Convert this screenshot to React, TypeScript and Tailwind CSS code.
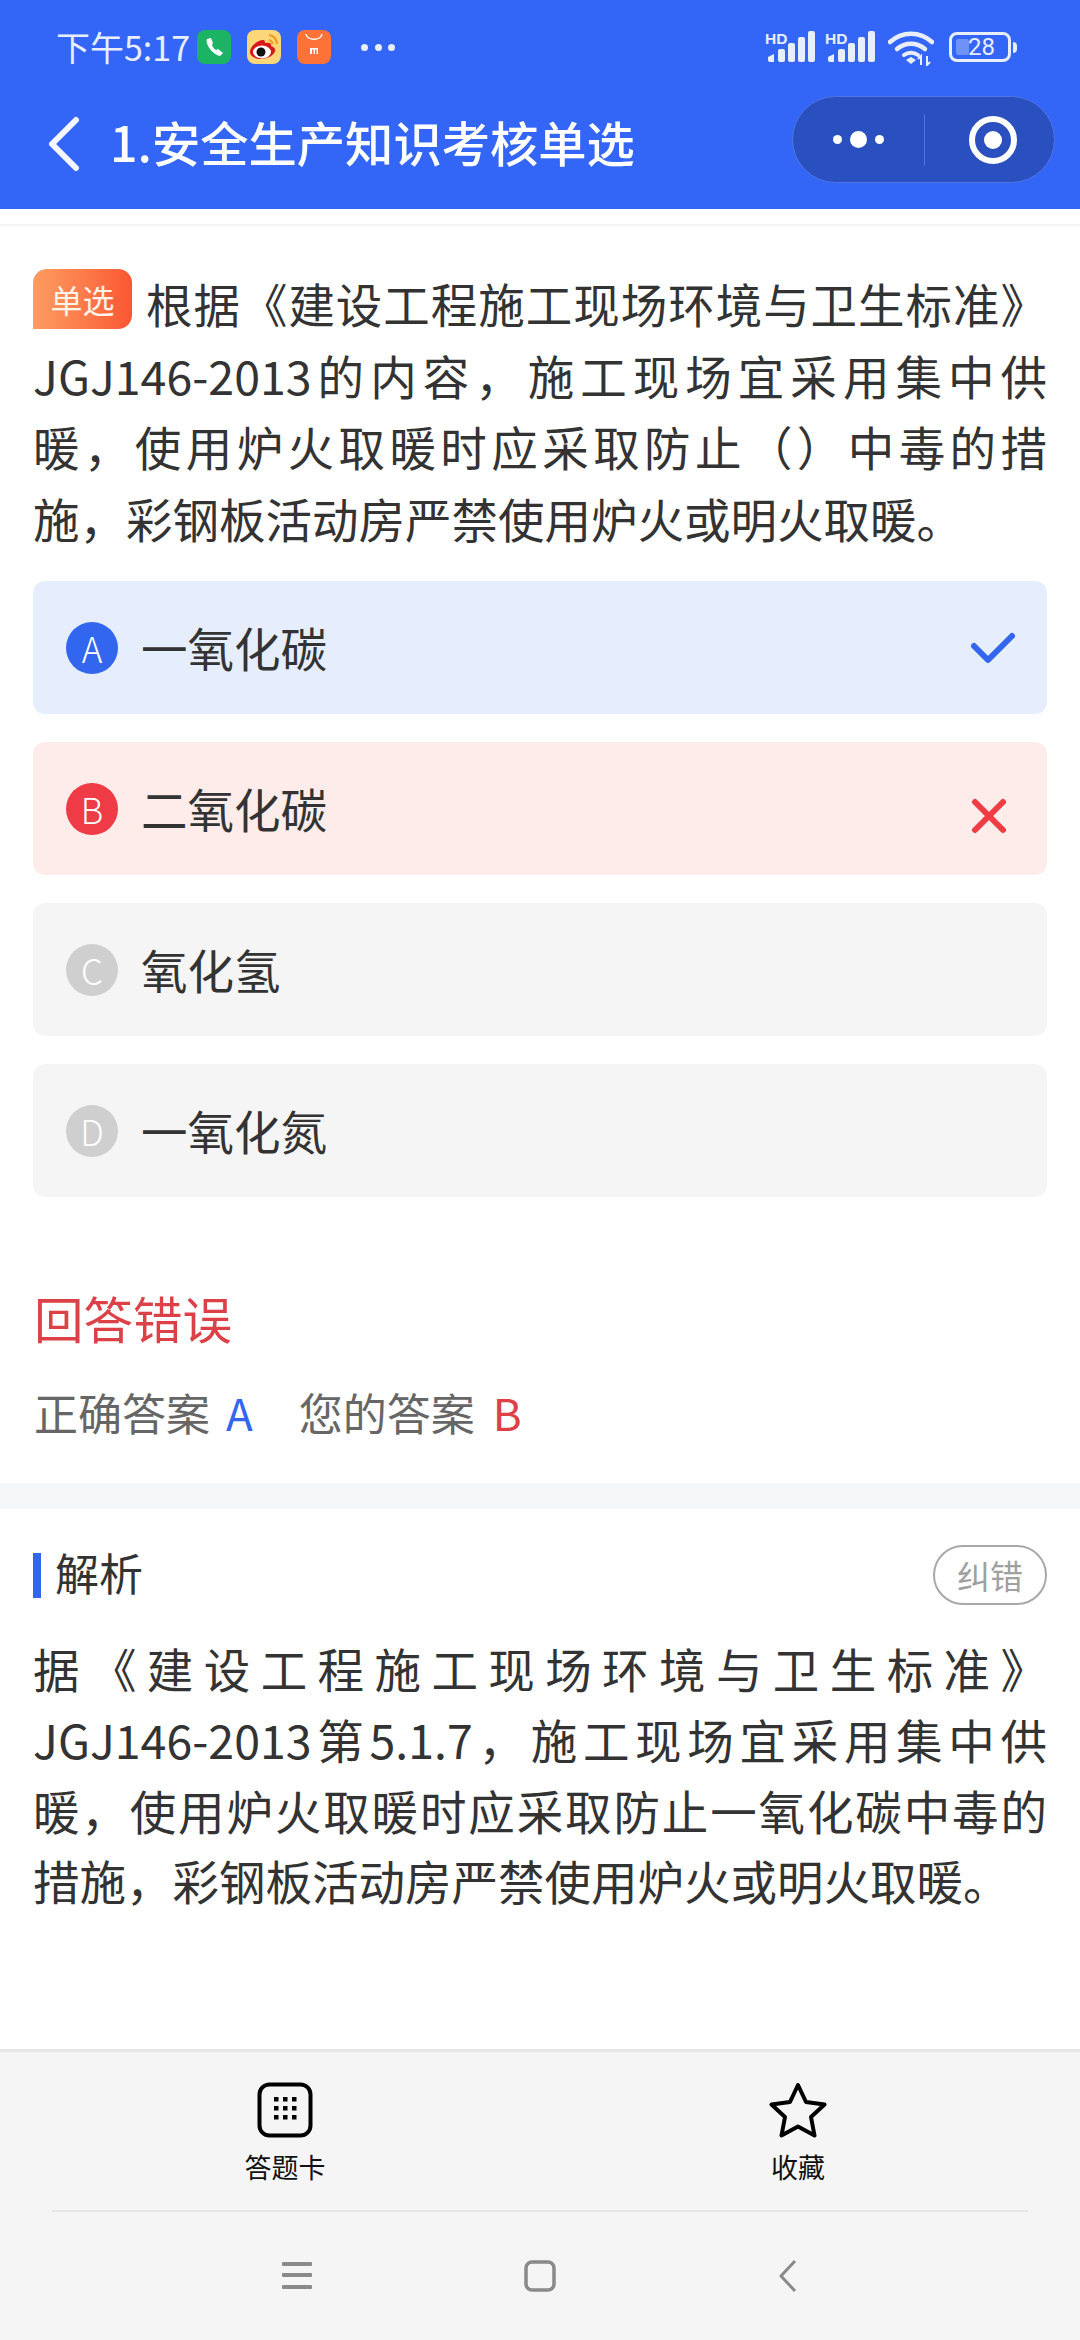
const FONT = "font-['Noto_Sans_CJK_SC','Noto_Sans',sans-serif]";

function Signal() {
  return (
    <svg width="50" height="33" viewBox="0 0 50 33" fill="#e8eefe">
      <text x="0" y="14" fontSize="15.500" fontWeight="700" fontFamily="Liberation Sans, sans-serif">HD</text>
      <path d="M3 27l6-3v8H5a2 2 0 0 1-2-2z" />
      <rect x="13" y="19" width="7" height="13" rx="2" />
      <rect x="23" y="13" width="7" height="19" rx="2" />
      <rect x="33" y="7" width="7" height="25" rx="2" />
      <rect x="43" y="1" width="7" height="31" rx="2" />
    </svg>
  );
}

function StatusBar() {
  return (
    <div className="flex h-[96px] items-start pl-[56px] pt-[30px]">
      <span className="w-[141px] text-[34px] leading-[34px] text-[#e8eefe]">下午5:17</span>
      <svg width="34" height="34" viewBox="0 0 34 34" className="shrink-0">
        <rect width="34" height="34" rx="8" fill="#1db364" />
        <path d="M10 9c-1 2 0 6 3 10s8 7 10 7l3-3-5-4-2 1c-2-1-3-3-4-5l1-2-2-5z" fill="#fff" />
      </svg>
      <svg width="34" height="34" viewBox="0 0 34 34" className="ml-[16px] shrink-0">
        <rect width="34" height="34" rx="8" fill="#fbd77a" />
        <path d="M3 22c0-6 8-12 13-12 2 0 2 2 2 3 4-1 7 0 6 3 3 1 5 3 4 5-1 5-9 8-14 8-6 0-11-3-11-7z" fill="#d8171c" />
        <ellipse cx="15" cy="22" rx="9" ry="6.500" fill="#fff" />
        <circle cx="14" cy="22" r="4.500" fill="#111" />
        <path d="M22 5a9 9 0 0 1 8 9M22 10a4.500 4.500 0 0 1 3.500 4" stroke="#f29c1f" strokeWidth="2.200" fill="none" />
      </svg>
      <svg width="34" height="34" viewBox="0 0 34 34" className="ml-[16px] shrink-0">
        <rect width="34" height="34" rx="8" fill="#fd7239" />
        <path d="M9 4c1 7 15 7 16 0" stroke="#fff" strokeWidth="1.500" fill="none" />
        <path d="M13 18h8v6h-1.500v-4.500h-1.500v4.500h-1.500v-4.500h-1.500v4.500H13z" fill="#fff" />
      </svg>
      <div className="ml-[30px] mt-[14px] flex w-[34px] justify-between">
        <span className="h-[7px] w-[7px] rounded-full bg-[#e8eefe]" />
        <span className="h-[7px] w-[7px] rounded-full bg-[#e8eefe]" />
        <span className="h-[7px] w-[7px] rounded-full bg-[#e8eefe]" />
      </div>
      <div className="ml-auto mr-[63px] flex items-start">
        <Signal />
        <div className="ml-[10px]"><Signal /></div>
        <svg width="46" height="36" viewBox="0 0 46 36" fill="none" className="ml-[13px]">
          <path d="M2 12c12-11 30-11 42 0" stroke="#e8eefe" strokeWidth="4.500" strokeLinecap="round" />
          <path d="M9 19c8-7 20-7 28 0" stroke="#e8eefe" strokeWidth="4.500" strokeLinecap="round" />
          <path d="M16 25c4-3 10-3 14 0" stroke="#e8eefe" strokeWidth="4" strokeLinecap="round" />
          <path d="M18 30l5-3 5 3-5 4z" fill="#e8eefe" />
          <path d="M33 35v-9l-3 3M39 26v9l3-3" stroke="#e8eefe" strokeWidth="2" />
        </svg>
        <div className="ml-[15px] mt-[2px] flex items-center">
          <div className="relative flex h-[30px] w-[62px] items-center justify-end rounded-[8px] border-[3px] border-[#e8eefe] pr-[13px] text-[24px] leading-none text-[#e8eefe]">
            <span className="absolute left-[4px] top-[4px] h-[16px] w-[13px] rounded-[2px] bg-[#6f92f8]" />
            <span className="relative font-['Roboto',sans-serif]">28</span>
          </div>
          <span className="ml-[2px] h-[11px] w-[4px] rounded-r-full bg-[#e8eefe]" />
        </div>
      </div>
    </div>
  );
}

function TitleBar() {
  return (
    <div className="flex h-[113px] items-start">
      <svg width="34" height="56" viewBox="0 0 34 56" fill="none" className="ml-[46px] mt-[20px] shrink-0">
        <path d="M30 4L6 28l24 24" stroke="#f4f7ff" strokeWidth="6" strokeLinecap="round" strokeLinejoin="round" />
      </svg>
      <span className="ml-[30px] mt-[11px] text-[48.300px] font-medium leading-[68px] text-white">1.安全生产知识考核单选</span>
      <div className="ml-auto mr-[25px] flex h-[87px] w-[263px] items-center rounded-full border border-[#4f76e4] bg-[#2a50c0]">
        <div className="flex w-[131px] items-center justify-center gap-[8px]">
          <span className="h-[9px] w-[9px] rounded-full bg-white" />
          <span className="h-[17px] w-[17px] rounded-full bg-white" />
          <span className="h-[9px] w-[9px] rounded-full bg-white" />
        </div>
        <span className="h-[52px] w-px bg-[#4f76e4]" />
        <div className="flex flex-1 items-center justify-center pl-[6px]">
          <span className="flex h-[48px] w-[48px] items-center justify-center rounded-full border-[6px] border-white">
            <span className="h-[18px] w-[18px] rounded-full bg-white" />
          </span>
        </div>
      </div>
    </div>
  );
}

function Option({ letter, text, tone, mark }: { letter: string; text: string; tone: string; mark?: React.ReactNode }) {
  const bg = tone === "blue" ? "bg-[#e6eefd]" : tone === "red" ? "bg-[#feecea]" : "bg-[#f5f5f5]";
  const dot = tone === "blue" ? "bg-[#3366ee]" : tone === "red" ? "bg-[#ef3b45]" : "bg-[#cfcfcf]";
  return (
    <div className={`flex h-[133px] items-center rounded-[12px] pl-[33px] ${bg}`}>
      <span className={`flex h-[52px] w-[52px] items-center justify-center rounded-full text-[35px] font-light leading-none text-white ${dot}`}>{letter}</span>
      <span className="ml-[23px] -translate-y-[1px] text-[46.500px] leading-[70px] text-[#333333]">{text}</span>
      {mark}
    </div>
  );
}

export default function App() {
  return (
    <div className={`flex h-[2340px] w-[1080px] flex-col overflow-hidden bg-white ${FONT}`}>
      <header className="h-[209px] shrink-0 bg-[#3366f6]">
        <StatusBar />
        <TitleBar />
      </header>
      <div className="h-[17px] shrink-0 border-b-2 border-[#f5f5f5]" />

      <section className="px-[33px] pt-[41px]">
        <p className="text-justify text-[46.500px] leading-[71.500px] text-[#333333]">
          <span className="relative -top-[9px] mr-[13px] inline-block h-[60px] w-[99px] rounded-[14px] rounded-bl-none bg-gradient-to-r from-[#fd9c62] to-[#fa5632] text-center align-[1px] text-[32px] leading-[60px] text-[#fff3ea]">单选</span>
          根据《建设工程施工现场环境与卫生标准》JGJ146-2013的内容，施工现场宜采用集中供暖，使用炉火取暖时应采取防止（）中毒的措施，彩钢板活动房严禁使用炉火或明火取暖。
        </p>
      </section>

      <section className="flex flex-col gap-[28px] px-[33px] pt-[28px]">
        <Option
          letter="A"
          text="一氧化碳"
          tone="blue"
          mark={
            <svg width="44" height="32" viewBox="0 0 44 32" fill="none" className="ml-auto mr-[32px]">
              <path d="M3 14l14 14L41 4" stroke="#3366ee" strokeWidth="6" strokeLinecap="round" strokeLinejoin="round" />
            </svg>
          }
        />
        <Option
          letter="B"
          text="二氧化碳"
          tone="red"
          mark={
            <svg width="36" height="36" viewBox="0 0 36 36" fill="none" className="ml-auto mr-[40px] mt-[14px]">
              <path d="M4 4l28 28M32 4L4 32" stroke="#ee3d45" strokeWidth="6" strokeLinecap="round" />
            </svg>
          }
        />
        <Option letter="C" text="氧化氢" tone="gray" />
        <Option letter="D" text="一氧化氮" tone="gray" />
      </section>

      <section className="px-[34px] pt-[85px]">
        <h2 className="text-[49.500px] font-normal leading-[72px] text-[#dc4148]">回答错误</h2>
        <div className="mt-[28px] flex text-[44px] leading-[60px] text-[#666666]">
          <span>正确答案</span>
          <span className="ml-[16px] text-[#3366ee]">A</span>
          <span className="ml-[46px]">您的答案</span>
          <span className="ml-[18px] text-[#dc4148]">B</span>
        </div>
      </section>

      <div className="mt-[41px] h-[26px] shrink-0 bg-[#f5f7f9]" />

      <section className="px-[33px] pt-[36px]">
        <div className="flex items-center justify-between">
          <div className="flex items-center">
            <span className="h-[45px] w-[8px] bg-[#3366ee]" />
            <span className="ml-[14px] -translate-y-[3px] text-[44px] leading-[58px] text-[#333333]">解析</span>
          </div>
          <span className="flex h-[60px] w-[114px] items-center justify-center rounded-full border-2 border-[#a8a8a8] text-[33px] leading-none text-[#a0a0a0]">纠错</span>
        </div>
        <p className="mt-[28px] text-justify text-[46.500px] leading-[70.800px] text-[#333333]">
          据《建设工程施工现场环境与卫生标准》<span className="whitespace-nowrap">JGJ146-2013</span>第5.1.7，施工现场宜采用集中供暖，使用炉火取暖时应采取防止一氧化碳中毒的措施，彩钢板活动房严禁使用炉火或明火取暖。
        </p>
      </section>

      <footer className="mt-auto h-[291px] shrink-0 border-t-[3px] border-[#e6e6e6] bg-[#f5f5f5]">
        <div className="flex h-[158px] pt-[30px]">
          <div className="flex w-[570px] flex-col items-center">
            <svg width="56" height="56" viewBox="0 0 56 56" fill="#000">
              <rect x="2.500" y="2.500" width="51" height="51" rx="10" fill="none" stroke="#000" strokeWidth="4" />
              {[16, 25, 34].map((y) =>
                [16, 25, 34].map((x) => <rect key={`${x}-${y}`} x={x + 1} y={y - 1} width="4.500" height="4.500" />)
              )}
            </svg>
            <span className="mt-[13px] text-[27px] leading-[32px] text-[#111111]">答题卡</span>
          </div>
          <div className="flex w-[456px] flex-col items-center">
            <svg width="58" height="56" viewBox="0 0 58 56" fill="none">
              <path d="M29 3l8 17 18.500 2.500L42 35l3.500 18.500L29 44.500 12.500 53.500 16 35 2.500 22.500 21 20z" stroke="#000" strokeWidth="4" strokeLinejoin="round" />
            </svg>
            <span className="mt-[13px] text-[27px] leading-[32px] text-[#111111]">收藏</span>
          </div>
        </div>
        <div className="mx-[52px] h-[2px] bg-[#e6e6e6]" />
        <div className="flex items-start pl-[282px] pt-[48px]">
          <svg width="30" height="30" viewBox="0 0 30 30" fill="#8a8a8a">
            <rect y="2" width="30" height="4" rx="1" />
            <rect y="13" width="30" height="4" rx="1" />
            <rect y="25" width="30" height="4" rx="1" />
          </svg>
          <svg width="32" height="32" viewBox="0 0 32 32" fill="none" className="ml-[212px]">
            <rect x="2" y="2" width="28" height="28" rx="6" stroke="#8a8a8a" strokeWidth="3.500" />
          </svg>
          <svg width="20" height="32" viewBox="0 0 20 32" fill="none" className="ml-[222px]">
            <path d="M17 1L3 16l14 15" stroke="#8a8a8a" strokeWidth="3" strokeLinejoin="round" />
          </svg>
        </div>
      </footer>
    </div>
  );
}
